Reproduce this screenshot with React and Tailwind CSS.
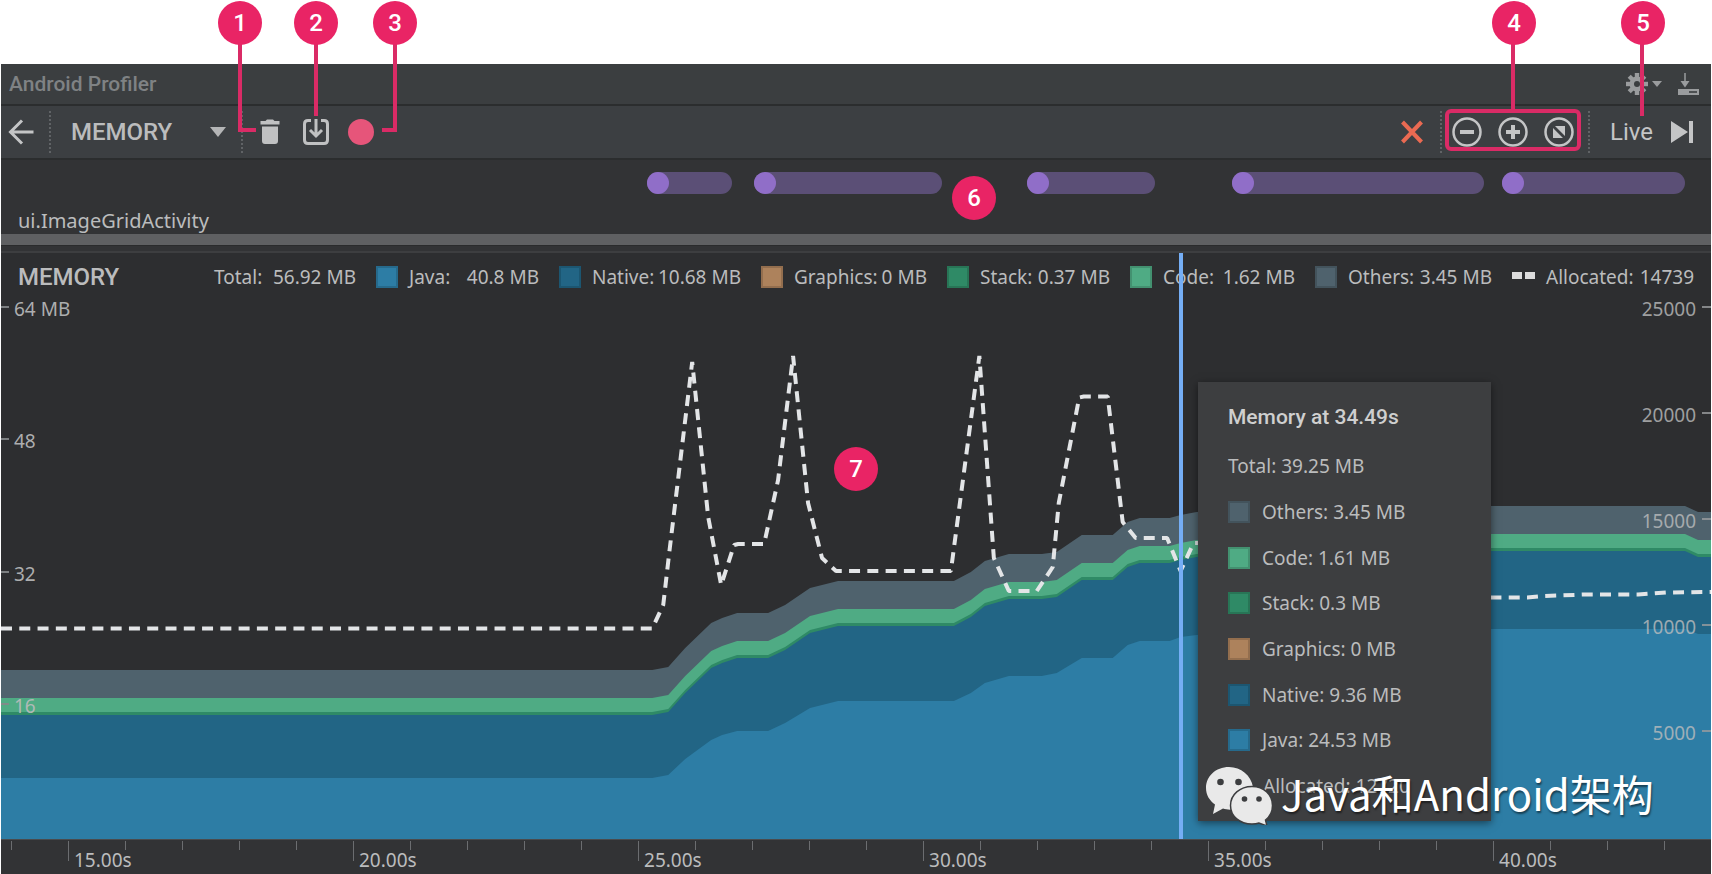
import React, { useState } from "react";
import clsx from "clsx";

const W = 1712;
const pct = (x) => `${(x / W) * 100}%`;

const events = [
	{ start: 647, end: 732 },
	{ start: 754, end: 942 },
	{ start: 1027, end: 1155 },
	{ start: 1232, end: 1485 },
	{ start: 1503, end: 1686 },
];

const legend = [
	{ label: "Total:", value: "56.92 MB", width: "w-[142px]" },
	{ label: "Java:", value: "40.8 MB", color: "bg-[#2d7da5]", width: "w-[130px]" },
	{ label: "Native:", value: "10.68 MB", color: "bg-[#226585]", width: "w-[149px]" },
	{ label: "Graphics:", value: "0 MB", color: "bg-[#ad825c]", width: "w-[133px]" },
	{ label: "Stack:", value: "0.37 MB", color: "bg-[#2f8a66]", width: "w-[130px]" },
	{ label: "Code:", value: "1.62 MB", color: "bg-[#4fab84]", width: "w-[132px]" },
	{ label: "Others:", value: "3.45 MB", color: "bg-[#4f626d]", width: "w-[144px]" },
	{ label: "Allocated:", value: "14739", dashed: true, width: "w-[148px]" },
];

const tooltipRows = [
	{ text: "Others: 3.45 MB", color: "bg-[#4f626d]" },
	{ text: "Code: 1.61 MB", color: "bg-[#4fab84]" },
	{ text: "Stack: 0.3 MB", color: "bg-[#2f8a66]" },
	{ text: "Graphics: 0 MB", color: "bg-[#ad825c]" },
	{ text: "Native: 9.36 MB", color: "bg-[#226585]" },
	{ text: "Java: 24.53 MB", color: "bg-[#2d7da5]" },
	{ text: "Allocated: 12720", dashed: true },
];

// x, top of the whole stack, top of the java layer
const samples = [
	[0, 670, 778], [652, 670, 778], [668, 667, 775], [685, 648, 759],
	[711, 623, 740], [722, 618, 735], [737, 613, 731], [768, 613, 731],
	[785, 605, 723], [810, 588, 708], [838, 581, 701], [954, 581, 701],
	[971, 572, 693], [985, 561, 683], [1009, 554, 676], [1042, 554, 676],
	[1057, 552, 673], [1082, 535, 658], [1113, 535, 658], [1128, 522, 645],
	[1140, 518, 641], [1170, 518, 641], [1181, 515, 637], [1197, 512, 635],
	[1300, 506, 629], [1686, 506, 629], [1699, 512, 634], [1712, 512, 634],
];

const allocated =
	"0,628.5 652,628.5 663,605 669,553 692,362 708,517 721,585 734,545 738,544 764,544 778,480 793,356 808,503 822,558 836,571 951,571 979.5,356 994,558 1009,591 1037,591 1053,567 1059,503 1079.5,397.5 1084,396.5 1108,396.5 1123,522 1136,538 1167.5,538 1181,571 1194,543 1210,543 1300,598 1528,597.5 1544,596 1586,594.5 1639,594.5 1667,592.5 1712,592";

const area = (col, offset) =>
	samples.map((s) => `${s[0]},${s[col] + offset}`).join(" ") + " 1712,839 0,839";

const leftAxis = [
	{ y: 308, label: "64 MB" },
	{ y: 440, label: "48" },
	{ y: 573, label: "32" },
	{ y: 705, label: "16" },
];

const rightAxis = [
	{ y: 308, label: "25000" },
	{ y: 414, label: "20000" },
	{ y: 520, label: "15000" },
	{ y: 626, label: "10000" },
	{ y: 732, label: "5000" },
];

const timeTicks = Array.from({ length: 30 }, (_, i) => ({
	x: 10 + i * 57.07,
	label: i % 5 === 1 ? `${15 + i - 1}.00s` : null,
}));

const Swatch = ({ color, dashed }) =>
	dashed ? (
		<span className="flex w-[23px] h-[22px] shrink-0 items-center gap-[3px]">
			<span className="w-[10px] h-[7px] mb-[3px] bg-[#dcdcdc]" />
			<span className="w-[10px] h-[7px] mb-[3px] bg-[#dcdcdc]" />
		</span>
	) : (
		<span className={clsx("w-[22px] h-[22px] shrink-0 border-2 border-black/15", color)} />
	);

const Separator = () => (
	<span className="w-0 h-[42px] shrink-0 border-l-2 border-dotted border-[#606366]" />
);

const Badge = ({ children, className }) => (
	<span
		className={clsx(
			"flex w-11 h-11 items-center justify-center rounded-full bg-[#e92465] font-[Roboto] text-2xl font-medium text-white",
			className
		)}
	>
		{children}
	</span>
);

const BackIcon = () => (
	<svg width="26" height="26" viewBox="0 0 26 26" fill="none" stroke="#c4c5c6" strokeWidth="3">
		<path d="M25.500 13H2.500M14 1.500L2.500 13L14 24.500" />
	</svg>
);

const TrashIcon = () => (
	<svg width="20" height="26" viewBox="0 0 20 26" fill="#c0c1c2">
		<path d="M5.500 2L7 .5H13L14.500 2H19.500V5.500H.5V2ZM2 7.500H18V22Q18 25 15 25H5Q2 25 2 22Z" />
	</svg>
);

const DumpIcon = () => (
	<svg width="28" height="28" viewBox="0 0 28 28" fill="none" stroke="#c0c1c2" strokeWidth="3">
		<path d="M9 2.500H6Q2.500 2.500 2.500 6V22Q2.500 25.500 6 25.500H22Q25.500 25.500 25.500 22V6Q25.500 2.500 22 2.500H19" />
		<path d="M14 1V18M8 12L14 18L20 12" />
	</svg>
);

const CloseIcon = () => (
	<svg width="22" height="24" viewBox="0 0 22 24" stroke="#ea6a52" strokeWidth="4">
		<path d="M1.500 2L20.500 22M20.500 2L1.500 22" />
	</svg>
);

const ZoomIcon = ({ children }) => (
	<svg width="30" height="30" viewBox="0 0 30 30" fill="none" stroke="#c4c5c6">
		<circle cx="15" cy="15" r="13.500" strokeWidth="2.500" />
		{children}
	</svg>
);

const GearIcon = () => (
	<svg width="24" height="24" viewBox="-12 -12 24 24" fill="#9a9c9e">
		{[0, 45, 90, 135].map((a) => (
			<rect key={a} x="-2.200" y="-11" width="4.400" height="22" transform={`rotate(${a})`} />
		))}
		<circle r="7.500" />
		<circle r="3" fill="#3b3e40" />
	</svg>
);

const HideIcon = () => (
	<svg width="21" height="24" viewBox="0 0 21 24">
		<path d="M7 1V11" stroke="#9a9c9e" strokeWidth="1.500" />
		<path d="M2.500 9H11.500L7 15.500Z" fill="#9a9c9e" />
		<rect y="17" width="21" height="6" fill="#9a9c9e" />
		<rect x="11" y="19.200" width="8" height="1.600" fill="#3b3e40" />
	</svg>
);

const WechatIcon = () => (
	<svg className="h-[60px] w-[68px] shrink-0" viewBox="0 0 68 60">
		<path
			d="M24 2C10.500 2 1 11.500 1 23C1 30 4.500 35.500 10 39.500L8 49L18 43.500C21 44.500 24 45 28 44.500L48 22C46 10.500 36 2 24 2Z"
			fill="#e9e9e9"
		/>
		<circle cx="15.500" cy="17" r="3.300" fill="#3c3d3f" />
		<circle cx="33.500" cy="17" r="3.300" fill="#3c3d3f" />
		<path
			d="M47 21.500C35 21.500 25.500 29.500 25.500 40.500C25.500 51.500 35 59 47 59C49.500 59 52 58.700 54 58L62 61L60.500 55C65 51.500 67.500 46.500 67.500 40.500C67.500 29.500 59 21.500 47 21.500Z"
			fill="#e9e9e9"
			stroke="#3c3d3f"
			strokeWidth="1.500"
		/>
		<circle cx="39.500" cy="34" r="2.800" fill="#3c3d3f" />
		<circle cx="54" cy="34" r="2.800" fill="#3c3d3f" />
	</svg>
);

const Callouts = () => (
	<div className="pointer-events-none absolute inset-x-0 top-0">
		<span className="absolute left-[238px] top-10 h-[92px] w-[18px] border-b-4 border-l-4 border-[#da2b66]" />
		<span className="absolute left-[314px] top-10 h-[76px] w-1 bg-[#da2b66]" />
		<span className="absolute left-[382px] top-10 h-[92px] w-[15px] border-b-4 border-r-4 border-[#da2b66]" />
		<span className="absolute right-[197px] top-10 h-[70px] w-1 bg-[#da2b66]" />
		<span className="absolute right-[68px] top-10 h-[76px] w-1 bg-[#da2b66]" />
		<Badge className="absolute left-[218px] top-px">1</Badge>
		<Badge className="absolute left-[294px] top-px">2</Badge>
		<Badge className="absolute left-[373px] top-px">3</Badge>
		<Badge className="absolute right-[176px] top-px">4</Badge>
		<Badge className="absolute right-[47px] top-px">5</Badge>
	</div>
);

const TitleBar = () => (
	<header className="flex h-[42px] items-center border-b-2 border-[#2b2d2e] bg-[#3b3e40] pl-2 pr-3">
		<h1 className="font-[Roboto] text-[21px] font-medium text-[#7f8284]">Android Profiler</h1>
		<button aria-label="Settings" className="ml-auto mr-4 flex items-center gap-[3px]">
			<GearIcon />
			<svg width="10" height="6" viewBox="0 0 10 6" fill="#9a9c9e">
				<path d="M0 0H10L5 6Z" />
			</svg>
		</button>
		<button aria-label="Hide">
			<HideIcon />
		</button>
	</header>
);

const Toolbar = () => {
	const [view, setView] = useState("MEMORY");
	return (
		<div className="flex h-[54px] items-center border-b-2 border-[#2b2d2e] bg-[#3c3f42] pl-[7px] pr-[17px]">
			<button aria-label="Back" className="mr-[15px]">
				<BackIcon />
			</button>
			<Separator />
			<label className="mr-[15px] flex items-center">
				<select
					aria-label="Profiler"
					value={view}
					onChange={(e) => setView(e.target.value)}
					className="w-[159px] appearance-none bg-transparent pl-5 font-[Roboto] text-2xl font-medium text-[#bbbcbd]"
				>
					<option>MEMORY</option>
				</select>
				<svg width="16" height="10" viewBox="0 0 16 10" fill="#b4b5b6">
					<path d="M0 0H16L8 10Z" />
				</svg>
			</label>
			<Separator />
			<button aria-label="Force garbage collection" className="ml-[17px]">
				<TrashIcon />
			</button>
			<button aria-label="Dump Java heap" className="ml-[22px]">
				<DumpIcon />
			</button>
			<button aria-label="Record" className="ml-[18px] h-[26px] w-[26px] rounded-full bg-[#e6557a]" />

			<button aria-label="Close" className="ml-auto mr-[17px]">
				<CloseIcon />
			</button>
			<Separator />
			<div className="mb-1 ml-[3px] mr-[7px] flex h-[42px] w-[136px] items-center justify-center gap-4 rounded-md border-4 border-[#da2b66] pt-[3px]">
				<button aria-label="Zoom out">
					<ZoomIcon>
						<path d="M8 15H22" strokeWidth="4" />
					</ZoomIcon>
				</button>
				<button aria-label="Zoom in">
					<ZoomIcon>
						<path d="M8 15H22M15 8V22" strokeWidth="4" />
					</ZoomIcon>
				</button>
				<button aria-label="Reset zoom">
					<ZoomIcon>
						<path d="M11 9H21V19ZM9 11V21H19Z" fill="#c4c5c6" stroke="none" />
					</ZoomIcon>
				</button>
			</div>
			<Separator />
			<button className="ml-5 flex items-center gap-[17px] font-[Roboto] text-2xl text-[#c4c5c6]">
				Live
				<svg width="24" height="24" viewBox="0 0 24 24" fill="#c4c5c6">
					<path d="M1 1L18 12L1 23ZM19 1H23V23H19Z" />
				</svg>
			</button>
		</div>
	);
};

const Activity = () => (
	<section className="relative flex h-[74px] items-end bg-[#323335] pb-px pl-[17px]">
		{events.map((e) => (
			<span
				key={e.start}
				className="absolute top-3 h-[22px] rounded-full bg-[#5b4f76]"
				style={{ left: pct(e.start), width: pct(e.end - e.start) }}
			>
				<span className="block h-[22px] w-[22px] rounded-full bg-[#906ec8]" />
			</span>
		))}
		<Badge className="absolute left-[951px] top-4">6</Badge>
		<p className="text-[20px]">ui.ImageGridActivity</p>
	</section>
);

const Tooltip = () => (
	<div className="absolute left-[70%] top-[129px] flex h-[439px] w-[293px] flex-col bg-[#3d3e40] pl-[30px] pt-5 shadow-[0_2px_8px_rgba(0,0,0,0.5)]">
		<h3 className="mb-5 font-[Roboto] text-[21px] font-medium leading-[30px] text-[#cfcfcf]">
			Memory at 34.49s
		</h3>
		<p className="mb-[18px] leading-[28px]">Total: 39.25 MB</p>
		<ul className="flex h-[302px] flex-col justify-between">
			{tooltipRows.map((r) => (
				<li key={r.text} className="flex items-center gap-3 leading-[28px]">
					<Swatch color={r.color} dashed={r.dashed} />
					{r.text}
				</li>
			))}
		</ul>
	</div>
);

const MemoryChart = () => (
	<section className="relative h-[586px] overflow-hidden bg-[#2d2e30]">
		<svg
			className="absolute inset-0 h-full w-full"
			viewBox="0 253 1712 586"
			preserveAspectRatio="none"
		>
			<polygon points={area(1, 0)} fill="#4f626d" />
			<polygon points={area(1, 28)} fill="#4fab84" />
			<polygon points={area(1, 42)} fill="#2f8a66" />
			<polygon points={area(1, 45)} fill="#226585" />
			<polygon points={area(2, 0)} fill="#2d7da5" />
			<polyline
				points={allocated}
				fill="none"
				stroke="#e3e5e7"
				strokeWidth="4"
				strokeDasharray="11 7.3"
				strokeLinejoin="bevel"
			/>
		</svg>

		<div className="relative flex items-center justify-between pl-[17px] pr-[17px] pt-2">
			<h2 className="font-[Roboto] text-2xl font-medium text-[#bbbcbd]">MEMORY</h2>
			<ul className="flex items-center gap-5">
				{legend.map((l) => (
					<li key={l.label} className="flex items-center gap-[11px]">
						{(l.color || l.dashed) && <Swatch color={l.color} dashed={l.dashed} />}
						<span className={clsx("flex justify-between whitespace-nowrap leading-[28px]", l.width)}>
							<span>{l.label}</span>
							<span>{l.value}</span>
						</span>
					</li>
				))}
			</ul>
		</div>

		{leftAxis.map((t) => (
			<div
				key={t.label}
				className="absolute left-0 flex items-center gap-[5px] opacity-90"
				style={{ top: t.y - 264 }}
			>
				<span className="mb-1 h-[2px] w-2 bg-[#85888a]" />
				{t.label}
			</div>
		))}
		{rightAxis.map((t) => (
			<div
				key={t.label}
				className="absolute right-0 flex items-center gap-[6px] opacity-80"
				style={{ top: t.y - 264 }}
			>
				{t.label}
				<span className="mb-1 h-[2px] w-[9px] bg-[#9a9c9e]" />
			</div>
		))}

		<span className="absolute left-[69%] top-0 h-full w-1 -translate-x-1/2 bg-[#75aef5]" />
		<Badge className="absolute left-[50%] top-[194px] -translate-x-1/2">7</Badge>
		<Tooltip />

		<div className="absolute left-[1204px] top-[512px] flex items-start gap-2">
			<WechatIcon />
			<span className="whitespace-nowrap font-['Noto_Sans_CJK_SC',sans-serif] text-[42px] leading-[56px] text-white [text-shadow:1px_2px_2px_rgba(0,0,0,0.5)]">
				Java和Android架构
			</span>
		</div>
	</section>
);

const TimeAxis = () => (
	<footer className="relative h-[35px] overflow-hidden border-t border-[#4a4b4d] bg-[#323335]">
		{timeTicks.map((t) => (
			<div key={t.x} className="absolute top-px" style={{ left: pct(t.x) }}>
				<span
					className={clsx("absolute left-0 top-0 w-px bg-[#6b6d70]", t.label ? "h-5" : "h-[9px]")}
				/>
				{t.label && <span className="absolute left-[6px] top-[7px]">{t.label}</span>}
			</div>
		))}
	</footer>
);

const App = () => (
	<main className="relative bg-white px-px pt-16 font-['Noto_Sans',sans-serif] text-[19px] leading-[24px] text-[#bbbcbd]">
		<TitleBar />
		<Toolbar />
		<Activity />
		<div className="h-[11px] bg-[#5f6062]" />
		<div className="h-2 border-b-2 border-t border-b-[#3d3e40] border-t-[#2a2b2c] bg-[#323335]" />
		<MemoryChart />
		<TimeAxis />
		<Callouts />
	</main>
);

export default App;
